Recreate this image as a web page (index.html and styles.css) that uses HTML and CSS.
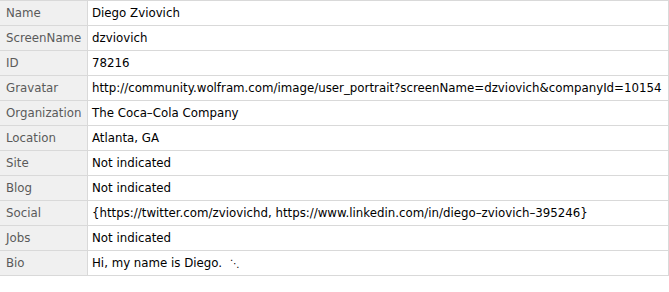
FILE: index.html
```html
<!DOCTYPE html>
<html>
<head>
<meta charset="utf-8">
<link rel="stylesheet" href="styles.css">
</head>
<body>
<table class="props">
  <tr><th>Name</th><td>Diego Zviovich</td></tr>
  <tr><th>ScreenName</th><td>dzviovich</td></tr>
  <tr><th>ID</th><td>78216</td></tr>
  <tr><th>Gravatar</th><td>http://community.wolfram.com/image/user_portrait?screenName=dzviovich&amp;companyId=10154</td></tr>
  <tr><th>Organization</th><td>The Coca–Cola Company</td></tr>
  <tr><th>Location</th><td>Atlanta, GA</td></tr>
  <tr><th>Site</th><td>Not indicated</td></tr>
  <tr><th>Blog</th><td>Not indicated</td></tr>
  <tr><th>Social</th><td>{https://twitter.com/zviovichd, https://www.linkedin.com/in/diego–zviovich–395246}</td></tr>
  <tr><th>Jobs</th><td>Not indicated</td></tr>
  <tr><th>Bio</th><td>Hi, my name is Diego. <span class="ell">⋱</span></td></tr>
</table>
</body>
</html>
```
FILE: styles.css
```css
html, body {
  margin: 0;
  padding: 0;
  background: #ffffff;
}

.props {
  border-collapse: collapse;
  table-layout: fixed;
  width: 669px;
  font-family: "DejaVu Sans", Verdana, sans-serif;
  font-size: 11.8px;
  color: #000;
}

.props th,
.props td {
  height: 24px;
  padding: 0 4px;
  border: 1px solid #d9d9d9;
  text-align: left;
  white-space: nowrap;
  vertical-align: middle;
  overflow: hidden;
}

.props th {
  width: 77px;
  background: #f0f0f0;
  color: #5a5a5a;
  font-weight: normal;
  padding-left: 6px;
  border-left: none;
}

.props td {
  padding-left: 4px;
}

.ell {
  font-size: 10px;
  margin-left: 4px;
}
```
